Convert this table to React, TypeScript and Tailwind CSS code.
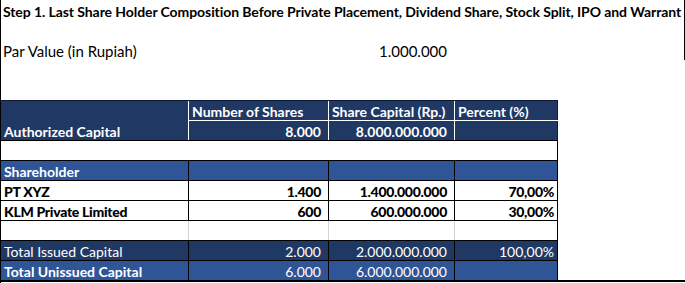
const font = { fontFamily: 'Lato, "Open Sans", sans-serif' };

type Cell = { text?: string; align?: 'left' | 'right'; pr?: string };

function Row({
  cells,
  bg,
  text,
  line,
  bottom,
}: {
  cells: Cell[];
  bg: string;
  text: string;
  line: string;
  bottom: string;
}) {
  const widths = ['w-[188px]', 'w-[140px]', 'w-[126px]', 'w-[103px]'];
  return (
    <div className={`flex h-5 border-b ${bottom} ${bg} ${text}`}>
      {cells.map((c, i) => (
        <div
          key={i}
          className={`${widths[i]} shrink-0 border-r ${line} flex items-end pb-[1px] leading-none ${
            c.align === 'right' ? 'justify-end' : 'justify-start pl-[3px]'
          } ${c.pr ?? ''}`}
        >
          {c.text}
        </div>
      ))}
    </div>
  );
}

export default function App() {
  return (
    <div className="relative w-[685px] h-[283px] bg-white text-black border-l border-black overflow-hidden" style={font}>
      {/* top rows */}
      <div className="h-[60px] border-r border-black">
        <div className="h-5 flex items-end pl-[2px] pb-[1px] text-[14px] font-bold leading-none tracking-[-0.08px]">
          Step 1. Last Share Holder Composition Before Private Placement, Dividend Share, Stock Split, IPO and Warrant
        </div>
        <div className="h-5" />
        <div className="h-5 flex items-end pb-[1px] text-[15px] leading-none">
          <div className="w-[188px] pl-[2px]">Par Value (in Rupiah)</div>
          <div className="w-[140px]" />
          <div className="w-[118px] text-right">1.000.000</div>
        </div>
      </div>
      <div className="h-[40px]" />

      {/* table */}
      <div className="w-[557px] border-t border-[#0d1a33] text-[14px]">
        {/* header block */}
        <div className="flex h-10 border-b border-black bg-[#203864] text-white font-bold">
          <div className="w-[188px] shrink-0 border-r border-white flex items-end pl-[3px] pb-[1px] leading-none">
            Authorized Capital
          </div>
          <div className="flex flex-col">
            <div className="flex h-5 border-b border-white">
              <div className="w-[140px] border-r border-white flex items-end pl-[3px] pb-[1px] leading-none">Number of Shares</div>
              <div className="w-[126px] border-r border-white flex items-end pl-[3px] pb-[1px] leading-none">Share Capital (Rp.)</div>
              <div className="w-[103px] border-r border-[#0d1a33] flex items-end pl-[3px] pb-[1px] leading-none">Percent (%)</div>
            </div>
            <div className="flex h-5">
              <div className="w-[140px] border-r border-white flex items-end justify-end pr-[7px] pb-[1px] leading-none">8.000</div>
              <div className="w-[126px] border-r border-white flex items-end justify-end pr-[7px] pb-[1px] leading-none">8.000.000.000</div>
              <div className="w-[103px] border-r border-[#0d1a33]" />
            </div>
          </div>
        </div>

        {/* empty row */}
        <div className="h-5 w-[557px] border-r border-b border-black bg-white" />

        <Row
          bg="bg-[#2f5597] font-bold"
          text="text-white"
          line="border-black"
          bottom="border-black"
          cells={[{ text: 'Shareholder' }, {}, {}, {}]}
        />
        <Row
          bg="bg-white font-black tracking-[-0.3px]"
          text="text-black"
          line="border-black"
          bottom="border-black"
          cells={[
            { text: 'PT XYZ' },
            { text: '1.400', align: 'right', pr: 'pr-[7px]' },
            { text: '1.400.000.000', align: 'right', pr: 'pr-[7px]' },
            { text: '70,00%', align: 'right', pr: 'pr-[3px]' },
          ]}
        />
        <Row
          bg="bg-white font-black tracking-[-0.3px]"
          text="text-black"
          line="border-black"
          bottom="border-black"
          cells={[
            { text: 'KLM Private Limited' },
            { text: '600', align: 'right', pr: 'pr-[7px]' },
            { text: '600.000.000', align: 'right', pr: 'pr-[7px]' },
            { text: '30,00%', align: 'right', pr: 'pr-[3px]' },
          ]}
        />
        <div className="flex h-5 border-b border-black bg-white">
          <div className="w-[188px] shrink-0 border-r border-[#d4d4d4]" />
          <div className="w-[140px] shrink-0 border-r border-[#d4d4d4]" />
          <div className="w-[126px] shrink-0 border-r border-[#d4d4d4]" />
          <div className="w-[103px] shrink-0 border-r border-black" />
        </div>
        <Row
          bg="bg-[#203864]"
          text="text-white"
          line="border-black"
          bottom="border-black"
          cells={[
            { text: 'Total Issued Capital' },
            { text: '2.000', align: 'right', pr: 'pr-[7px]' },
            { text: '2.000.000.000', align: 'right', pr: 'pr-[7px]' },
            { text: '100,00%', align: 'right', pr: 'pr-[3px]' },
          ]}
        />
        <div className="flex h-[19px] bg-[#2f5597] text-white">
          <div className="w-[188px] shrink-0 border-r border-black flex items-end pl-[3px] pb-[1px] leading-none font-bold">Total Unissued Capital</div>
          <div className="w-[140px] shrink-0 border-r border-black flex items-end justify-end pr-[7px] pb-[1px] leading-none">6.000</div>
          <div className="w-[126px] shrink-0 border-r border-black flex items-end justify-end pr-[7px] pb-[1px] leading-none">6.000.000.000</div>
          <div className="w-[103px] shrink-0 border-r border-black" />
        </div>
      </div>
      <div className="w-[685px] h-[2px] bg-black -ml-px" />
    </div>
  );
}
